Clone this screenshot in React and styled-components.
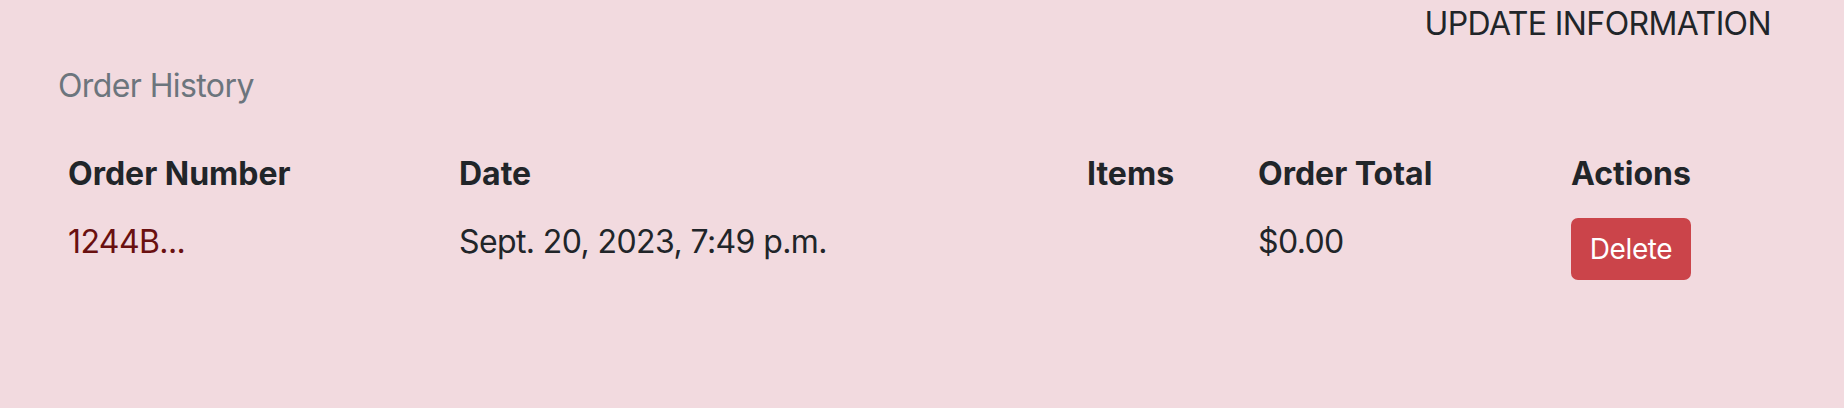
import React from "react";
import styled, { createGlobalStyle } from "styled-components";

const GlobalStyle = createGlobalStyle`
  html, body {
    margin: 0;
    padding: 0;
    background-color: #f2dadf;
  }
  body {
    font-family: Inter, "Noto Sans", "Liberation Sans", sans-serif;
    color: #212529;
    font-size: 32px;
    line-height: 48px;
    letter-spacing: -0.6px;
  }
`;

const columns = [
  { key: "number", label: "Order Number", width: 391 },
  { key: "date", label: "Date", width: 628 },
  { key: "items", label: "Items", width: 171 },
  { key: "total", label: "Order Total", width: 313 },
  { key: "actions", label: "Actions", width: 237 },
];

const orders = [
  {
    id: "1244B8C2",
    date: "Sept. 20, 2023, 7:49 p.m.",
    items: "",
    total: "$0.00",
  },
];

const App = () => {
  return (
    <Page>
      <GlobalStyle />
      <TopBar>
        <NavLink href="#">UPDATE INFORMATION</NavLink>
      </TopBar>
      <Section>
        <Heading>Order History</Heading>
        <Table>
          <thead>
            <tr>
              {columns.map((col) => (
                <Th key={col.key} $width={col.width}>
                  {col.label}
                </Th>
              ))}
            </tr>
          </thead>
          <tbody>
            {orders.map((order) => (
              <tr key={order.id}>
                <Td>
                  <OrderLink href="#">{order.id.slice(0, 5)}...</OrderLink>
                </Td>
                <Td>{order.date}</Td>
                <Td>{order.items}</Td>
                <Td>{order.total}</Td>
                <Td>
                  <DeleteButton type="button">Delete</DeleteButton>
                </Td>
              </tr>
            ))}
          </tbody>
        </Table>
      </Section>
    </Page>
  );
};

export default App;

const Page = styled.div`
  width: 100%;
  height: 408px;
  overflow: hidden;
`;

const TopBar = styled.div`
  display: flex;
  justify-content: flex-end;
  padding-right: 73px;
  height: 48px;
`;

const NavLink = styled.a`
  color: #212529;
  text-decoration: none;
  font-size: 32px;
  line-height: 48px;
`;

const Section = styled.div`
  padding: 14px 52px 0 52px;
`;

const Heading = styled.div`
  color: #6c757d;
  font-size: 32px;
  line-height: 48px;
  padding-left: 6px;
`;

const Table = styled.table`
  width: 1740px;
  margin-top: 24px;
  border-collapse: collapse;
  table-layout: fixed;
  vertical-align: top;
`;

const Th = styled.th`
  box-sizing: border-box;
  width: ${(p) => p.$width}px;
  text-align: left;
  font-weight: 700;
  letter-spacing: 0;
  padding: 16px 16px 4px 16px;
  vertical-align: top;
`;

const Td = styled.td`
  padding: 16px;
  vertical-align: top;
`;

const OrderLink = styled.a`
  color: #6a1010;
  text-decoration: none;
`;

const DeleteButton = styled.button`
  font-family: inherit;
  font-size: 28px;
  line-height: 42px;
  letter-spacing: -0.4px;
  color: #fff;
  background-color: #cb444a;
  border: 2px solid #cb444a;
  border-radius: 7px;
  padding: 8px 16px;
  height: 62px;
  width: 120px;
  cursor: pointer;
`;
